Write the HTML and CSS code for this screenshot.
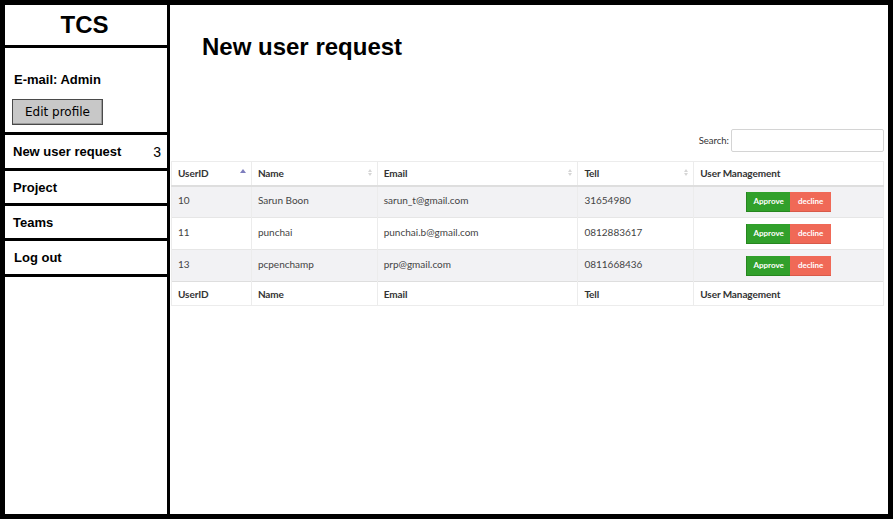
FILE: index.html
```html
<!DOCTYPE html>
<html lang="en">
<head>
<meta charset="utf-8">
<title>New user request</title>
<link rel="stylesheet" href="styles.css">
</head>
<body>
<div class="frame">
  <aside class="sidebar">
    <div class="brand">TCS</div>
    <div class="profile">
      <div class="email">E-mail: Admin</div>
      <button class="edit-btn" type="button">Edit profile</button>
    </div>
    <nav class="menu">
      <a class="menu-item" href="#"><span>New user request</span><span class="count">3</span></a>
      <a class="menu-item" href="#"><span>Project</span></a>
      <a class="menu-item" href="#"><span>Teams</span></a>
      <a class="menu-item logout" href="#"><span>Log out</span></a>
    </nav>
  </aside>
  <main class="main">
    <h1 class="page-title">New user request</h1>
    <div class="search-row">
      <label class="search-label" for="q">Search:</label>
      <input class="search-input" id="q" type="search">
    </div>
    <table class="grid">
      <colgroup>
        <col class="c-id"><col class="c-name"><col class="c-email"><col class="c-tell"><col class="c-mgmt">
      </colgroup>
      <thead>
        <tr>
          <th class="sort asc">UserID</th>
          <th class="sort">Name</th>
          <th class="sort">Email</th>
          <th class="sort">Tell</th>
          <th>User Management</th>
        </tr>
      </thead>
      <tbody>
        <tr class="odd">
          <td>10</td><td>Sarun Boon</td><td>sarun_t@gmail.com</td><td>31654980</td>
          <td class="actions"><span class="btn-group"><button class="btn approve" type="button">Approve</button><button class="btn decline" type="button">decline</button></span></td>
        </tr>
        <tr>
          <td>11</td><td>punchai</td><td>punchai.b@gmail.com</td><td>0812883617</td>
          <td class="actions"><span class="btn-group"><button class="btn approve" type="button">Approve</button><button class="btn decline" type="button">decline</button></span></td>
        </tr>
        <tr class="odd">
          <td>13</td><td>pcpenchamp</td><td>prp@gmail.com</td><td>0811668436</td>
          <td class="actions"><span class="btn-group"><button class="btn approve" type="button">Approve</button><button class="btn decline" type="button">decline</button></span></td>
        </tr>
      </tbody>
      <tfoot>
        <tr>
          <th>UserID</th><th>Name</th><th>Email</th><th>Tell</th><th>User Management</th>
        </tr>
      </tfoot>
    </table>
  </main>
</div>
</body>
</html>
```

FILE: styles.css
```css
* { box-sizing: border-box; }

html, body {
  margin: 0;
  padding: 0;
  background: #fff;
}

.frame {
  width: 893px;
  height: 519px;
  border: 5px solid #000;
  display: flex;
  font-family: "Liberation Sans", Arial, sans-serif;
  color: #000;
}

/* ---------- sidebar ---------- */
.sidebar {
  width: 165px;
  flex: none;
  border-right: 3px solid #000;
  display: flex;
  flex-direction: column;
}

.brand {
  height: 43px;
  border-bottom: 3px solid #000;
  display: flex;
  align-items: center;
  justify-content: center;
  font-weight: bold;
  font-size: 24px;
  padding-bottom: 1px;
  padding-right: 3px;
}

.profile {
  height: 84px;
  padding: 24px 0 0 7px;
}

.email {
  font-weight: bold;
  font-size: 13px;
  line-height: 15px;
  padding-left: 2px;
}

.edit-btn {
  display: block;
  margin-top: 12px;
  width: 91px;
  height: 26px;
  background: #c8c8c8;
  border: 1px solid #4a4a4a;
  box-shadow: inset -1px -1px 0 #9a9a9a;
  font-family: "DejaVu Sans", sans-serif;
  font-size: 12px;
  color: #000;
  padding: 0;
}

.menu {
  display: flex;
  flex-direction: column;
}

.menu-item {
  display: flex;
  align-items: center;
  justify-content: space-between;
  height: 36px;
  border-top: 3px solid #000;
  padding: 0 6px 0 8px;
  color: #000;
  text-decoration: none;
  font-weight: bold;
  font-size: 13px;
}

.menu-item:nth-child(2),
.menu-item:nth-child(3) {
  height: 35px;
}

.menu-item.logout {
  border-bottom: 3px solid #000;
  height: 39px;
  padding-left: 9px;
}

.count {
  font-weight: normal;
  font-size: 14px;
}

/* ---------- main ---------- */
.main {
  flex: 1;
  min-width: 0;
  display: flex;
  flex-direction: column;
  padding-right: 4px;
}

.page-title {
  margin: 28px 0 0 32px;
  font-size: 24px;
  line-height: 28px;
  font-weight: bold;
}

.search-row {
  margin-top: 68px;
  display: flex;
  justify-content: flex-end;
  align-items: center;
  gap: 2px;
  font-family: Lato, "Noto Sans", sans-serif;
  font-size: 9.5px;
  color: #333;
}

.search-input {
  width: 153px;
  height: 23px;
  border: 1px solid #d4d4d4;
  border-radius: 2px;
  margin: 0;
  padding: 0 4px;
}

/* ---------- table ---------- */
.grid {
  margin: 9px 0 0 1px;
  width: 713px;
  border-collapse: collapse;
  font-family: Lato, "Noto Sans", sans-serif;
  font-size: 10px;
  color: #444;
  border: 1px solid #ececec;
}

.c-id { width: 80px; }
.c-name { width: 126px; }
.c-email { width: 201px; }
.c-tell { width: 116px; }
.c-mgmt { width: 190px; }

.grid th,
.grid td {
  text-align: left;
  padding: 0 6px;
  border-left: 1px solid #ececec;
  border-right: 1px solid #ececec;
  vertical-align: middle;
}

.grid th {
  font-weight: bold;
  color: #333;
  letter-spacing: -0.1px;
}

.grid thead tr { height: 24px; }
.grid thead th { border-bottom: 2px solid #dedede; }
.grid tbody tr { height: 32px; }
.grid tbody td { border-top: 1px solid #e6e6e6; padding-bottom: 4px; }
.grid tbody tr.odd td { background: #f2f2f4; }
.grid tfoot tr { height: 24px; }
.grid tfoot th { border-top: 1px solid #dedede; border-bottom: 1px solid #ececec; }

.sort {
  position: relative;
}

.sort::before,
.sort::after {
  content: "";
  position: absolute;
  right: 5px;
  width: 0;
  height: 0;
  border-left: 2.5px solid transparent;
  border-right: 2.5px solid transparent;
}

.sort::before {
  top: 7px;
  border-bottom: 3px solid #d6d6d6;
}

.sort::after {
  top: 11px;
  border-top: 3px solid #d6d6d6;
}

.sort.asc::before {
  top: 7px;
  border-left-width: 3px;
  border-right-width: 3px;
  border-bottom: 4px solid #7d7dbd;
}

.sort.asc::after {
  display: none;
}

.actions {
  text-align: center !important;
}

.btn-group {
  display: inline-flex;
  vertical-align: middle;
  margin-top: 4px;
}

.btn {
  height: 20px;
  margin: 0;
  padding: 0;
  border: 0;
  font-family: Lato, "Noto Sans", sans-serif;
  font-weight: bold;
  font-size: 8px;
  color: #fff;
}

.btn.approve {
  width: 44px;
  background: #31a02b;
  border-left: 1px solid #26861f;
  border-bottom: 1px solid #26861f;
}

.btn.decline {
  width: 41px;
  background: #f06957;
  border-bottom: 1px solid #d85a4a;
}
```
